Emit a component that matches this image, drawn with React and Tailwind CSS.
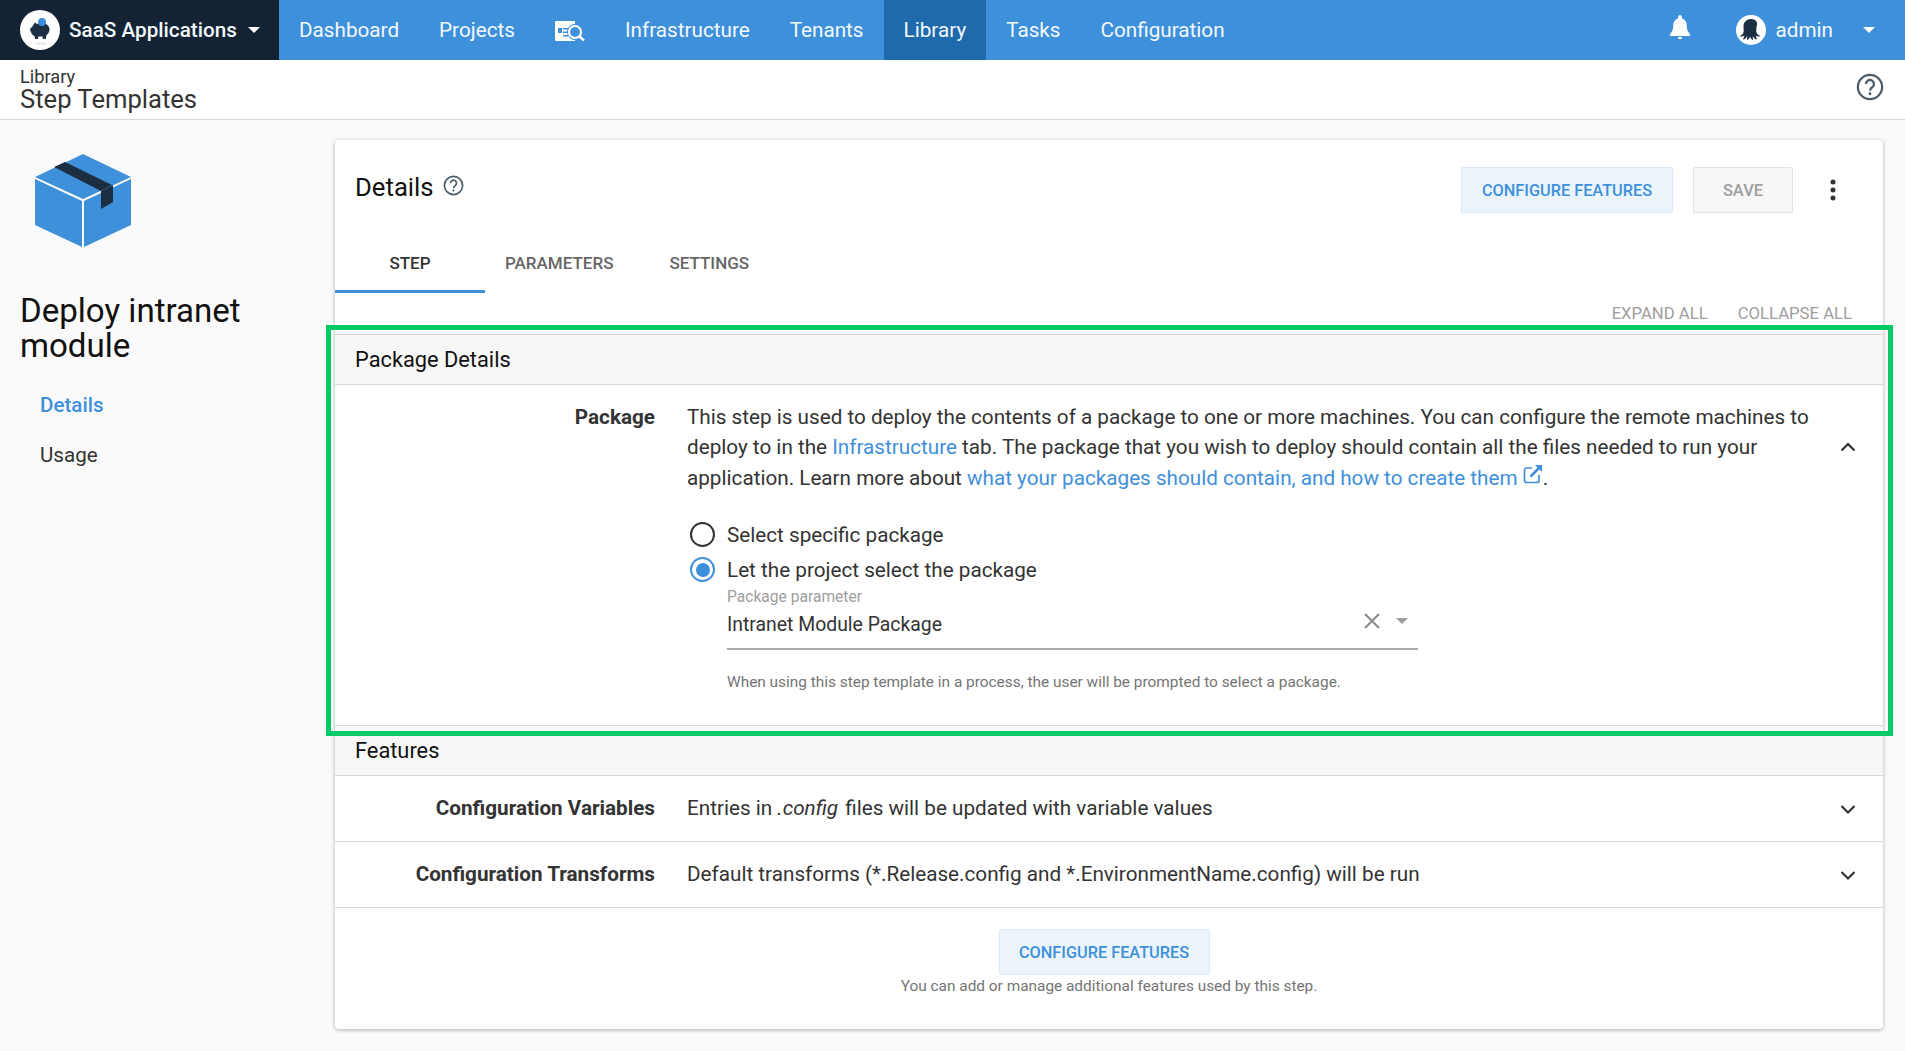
import React from "react";

const T = "font-['Roboto',sans-serif]";

function Caret({ className = "" }) {
  return (
    <svg viewBox="0 0 12 6" className={className}>
      <path d="M0 0h12L6 6z" fill="currentColor" />
    </svg>
  );
}

function Help({ size, color = "#4b5b68" }) {
  return (
    <svg width={size} height={size} viewBox="0 0 24 24" fill="none">
      <circle cx="12" cy="12" r="10.4" stroke={color} strokeWidth="1.9" />
      <path d="M8.6 9.4a3.4 3.4 0 1 1 5.3 2.8c-1.2.8-1.9 1.4-1.9 3" stroke={color} strokeWidth="1.9" fill="none" />
      <circle cx="12" cy="17.8" r="1.2" fill={color} />
    </svg>
  );
}

function Chevron({ up }) {
  return (
    <svg width="18" height="12" viewBox="0 0 18 12" fill="none">
      <path d={up ? "M2.5 9.5 9 3l6.5 6.5" : "M2.5 3 9 9.5 15.5 3"} stroke="#333" strokeWidth="2.2" />
    </svg>
  );
}

function BoxLogo() {
  return (
    <svg width="98" height="96" viewBox="34 152 98 96" className="ml-[34px] mt-[13px]">
      <path d="M83 153 131 176 83 198 35 176Z" fill="#3f90db" />
      <path d="M35 178 82 200V246L35 224Z" fill="#3f90db" />
      <path d="M131 178 84 200V246L131 224Z" fill="#3f90db" />
      <path d="M54 166 65 161 112 184 101 190Z" fill="#1b2e42" />
      <path d="M101 190 113 184V201L101 208Z" fill="#1b2e42" />
    </svg>
  );
}

function Row({ label, children }) {
  return (
    <div className="flex h-[66px] items-center border-b border-[#d8d8d8] bg-white pt-[1px]">
      <div className="w-[320px] text-right text-[20.7px] font-bold text-[#333]">{label}</div>
      <div className="ml-[32px] flex-1 text-[20.7px] text-[#333]">{children}</div>
      <div className="mr-[26px]">
        <Chevron />
      </div>
    </div>
  );
}

function Radio({ on, label }) {
  return (
    <div className="flex h-[35px] items-center">
      <span
        className={`mr-[12px] ml-[3px] flex h-[25px] w-[25px] items-center justify-center rounded-full border-[2.4px] ${
          on ? "border-[#3f90db]" : "border-[#333]"
        }`}
      >
        {on && <span className="h-[14px] w-[14px] rounded-full bg-[#3f90db]" />}
      </span>
      <span className="text-[20.7px] text-[#333]">{label}</span>
    </div>
  );
}

function NavItem({ children, active }) {
  return (
    <div className={`flex h-full items-center px-5 pt-[2px] text-[20.7px] text-[#f3f8fd] ${active ? "bg-[#1f69ad]" : ""}`}>
      {children}
    </div>
  );
}

export default function App() {
  return (
    <div className={`${T} relative min-h-[1051px] overflow-hidden bg-[#fafafa]`}>
      {/* top bar */}
      <div className="flex h-[60px] bg-[#3f90db]">
        <div className="flex w-[279px] items-center bg-[#132333] pl-[20px]">
          <svg width="40" height="40" viewBox="0 0 40 40">
            <circle cx="20" cy="20" r="20" fill="#fff" />
            <path d="M12 17c-2 1-2.500 3.500-1 5 .5 2 2 3.500 3.500 4l.5 3h3l.3-2.500h4.200l.3 2.500h3l.7-4c2-1.500 3-3.500 3-5.500 0-4-3.500-6.500-8-6.500-1.500 0-3 .2-4.500 1l-2-1.500z" fill="#1b2e42" />
            <circle cx="22" cy="12" r="4" fill="#3f90db" />
            <path d="M14 35h13l-2.500-3h-8z" fill="#eeeeee" />
          </svg>
          <span className="ml-[9px] pt-[2px] text-[20.7px] font-medium text-[#f3f8fd]">SaaS Applications</span>
          <Caret className="ml-[11px] w-[12px] text-white" />
        </div>
        <NavItem>Dashboard</NavItem>
        <NavItem>Projects</NavItem>
        <NavItem>
          <svg width="30" height="20" viewBox="0 0 30 20">
            <path d="M0 1a1 1 0 0 1 1-1h19v20H1a1 1 0 0 1-1-1z" fill="#fff" />
            <path d="M3 7h4v5H3z" fill="#3f90db" />
            <path d="M8 7h5v1.600H8zM8 10.500h5v1.600H8zM8 14h5v1.600H8z" fill="#3f90db" />
            <circle cx="20" cy="11" r="7" fill="#3f90db" stroke="#3f90db" strokeWidth="2" />
            <circle cx="20" cy="11" r="6" fill="#3f90db" stroke="#fff" strokeWidth="2.200" />
            <path d="M24.500 15.500l4.500 4" stroke="#fff" strokeWidth="2.400" />
          </svg>
        </NavItem>
        <NavItem>Infrastructure</NavItem>
        <NavItem>Tenants</NavItem>
        <NavItem active>Library</NavItem>
        <NavItem>Tasks</NavItem>
        <NavItem>Configuration</NavItem>
        <div className="ml-auto flex items-center">
          <svg width="20" height="25" viewBox="0 0 20 25" className="mb-[5px]">
            <path d="M10 0a1.800 1.800 0 0 1 1.800 1.800v1.400C15 4.200 16.800 7 16.800 10.500c0 3.700.7 6 3.200 8.500v2H0v-2c2.500-2.500 3.200-4.800 3.200-8.500C3.200 7 5 4.200 8.200 3.200V1.800A1.800 1.800 0 0 1 10 0Z" fill="#fff" />
            <path d="M7.800 22h4.400a2.200 2.200 0 0 1-4.400 0Z" fill="#fff" />
          </svg>
          <svg width="30" height="30" viewBox="0 0 30 30" className="ml-[46px]">
            <circle cx="15" cy="15" r="15" fill="#fff" />
            <path d="M15 4c-4.500 0-7.500 3.300-7.500 7.500 0 3 .8 5-.5 7-1 1.500-2.500 2-3.500 2.500 1.500 1 3.800.3 5-.8-.4 1.600-1.200 3-1.500 4.300 1.800 0 3.300-1.800 4.200-3.500 0 1.600-.2 3-.2 4 1.400-.3 2.500-2 3-3.500.5 1.500 1.600 3.200 3 3.500 0-1-.2-2.400-.2-4 .9 1.700 2.400 3.500 4.200 3.500-.3-1.300-1.100-2.700-1.500-4.300 1.200 1.100 3.500 1.800 5 .8-1-.5-2.500-1-3.500-2.500-1.300-2-.5-4-.5-7C22.500 7.300 19.500 4 15 4Z" fill="#1b2e42" />
          </svg>
          <span className="ml-[9px] pt-[2px] text-[20.7px] text-[#f3f8fd]">admin</span>
          <Caret className="ml-[30px] mr-[30px] w-[12px] text-white" />
        </div>
      </div>

      {/* title bar */}
      <div className="flex h-[60px] items-center justify-between border-b border-[#d8d8d8] bg-white pl-[20px] pr-[21px]">
        <div className="flex flex-col">
          <span className="text-[18.2px] leading-[19px] text-[#333]">Library</span>
          <span className="text-[25.6px] leading-[27px] text-[#333]">Step Templates</span>
        </div>
        <div className="mb-[6px]">
          <Help size={28} />
        </div>
      </div>

      <div className="flex">
        {/* sidebar */}
        <div className="w-[335px] pt-[20px]">
          <BoxLogo />
          <div className="mt-[44px] pl-[20px] text-[33.1px] leading-[35px] text-[#111]">
            Deploy intranet
            <br />
            module
          </div>
          <div className="mt-[27px] pl-[40px] text-[20.6px] font-medium text-[#3f90db]">Details</div>
          <div className="mt-[19px] pl-[40px] text-[20.6px] text-[#333]">Usage</div>
        </div>

        {/* card */}
        <div className="mt-[20px] h-[889px] w-[1548px] rounded-[4px] bg-white shadow-[0_1px_4px_rgba(0,0,0,0.3)]">
          <div className="flex h-[93px] items-center pl-[20px]">
            <span className="pt-[2px] text-[25.7px] text-[#111]">Details</span>
            <span className="ml-[9px] mb-[2px]">
              <Help size={21} />
            </span>
            <button className="ml-auto mt-[7px] flex h-[46px] w-[212px] items-center justify-center rounded-[2px] border border-[#dbe8f5] bg-[#ecf4fb] pt-[2px] text-[16.3px] font-medium text-[#3f90db]">
              CONFIGURE FEATURES
            </button>
            <button className="ml-[20px] mt-[7px] flex h-[46px] w-[100px] items-center justify-center rounded-[2px] border border-[#e2e2e2] bg-[#f7f7f7] pt-[2px] text-[16.5px] font-medium text-[#9e9e9e]">
              SAVE
            </button>
            <svg width="8" height="24" viewBox="0 0 8 24" className="ml-[36px] mr-[46px] mt-[7px]">
              <circle cx="4" cy="4" r="2.500" fill="#333" />
              <circle cx="4" cy="12" r="2.500" fill="#333" />
              <circle cx="4" cy="20" r="2.500" fill="#333" />
            </svg>
          </div>
          <div className="flex h-[60px] items-center text-[17px] font-medium text-[#666]">
            <div className="flex h-full w-[150px] items-center justify-center border-b-[3px] border-[#3f90db] pt-[5px] text-[#333]">
              STEP
            </div>
            <div className="px-5 pt-[2px]">PARAMETERS</div>
            <div className="ml-4 px-5 pt-[2px]">SETTINGS</div>
          </div>
          <div className="flex h-[41px] items-center justify-end gap-[30px] pr-[31px] pt-[1px] text-[16.7px] text-[#9e9e9e]">
            <span>EXPAND ALL</span>
            <span>COLLAPSE ALL</span>
          </div>

          <div className="flex h-[51px] items-center border-y border-[#d8d8d8] bg-[#f7f7f7] pl-[20px] pt-[1px] text-[21.8px] text-[#111]">
            Package Details
          </div>

          <div className="flex h-[341px] border-b border-[#d8d8d8] pt-[17px]">
            <div className="w-[320px] text-right text-[20.7px] font-bold leading-[30.400px] text-[#333]">Package</div>
            <div className="ml-[32px] flex-1 text-[20.7px] leading-[30.400px] text-[#333]">
              <p>
                This step is used to deploy the contents of a package to one or more machines. You can configure the remote machines to
                <br />
                deploy to in the <span className="text-[#3f90db]">Infrastructure</span> tab. The package that you wish to deploy should contain all the files needed to run your
                <br />
                application. Learn more about{" "}
                <span className="text-[#3f90db]">what your packages should contain, and how to create them</span>{" "}
                <svg width="20" height="20" viewBox="0 0 20 20" fill="none" className="inline-block align-[1px]">
                  <path d="M16 11v5.500a2 2 0 0 1-2 2H3.500a2 2 0 0 1-2-2V6a2 2 0 0 1 2-2H9" stroke="#3f90db" strokeWidth="1.700" />
                  <path d="M7.500 12.500 17 3" stroke="#3f90db" strokeWidth="2.500" />
                  <path d="M12 1h7v7z" fill="#3f90db" />
                </svg>
                .
              </p>
              <div className="mt-[24px]">
                <Radio label="Select specific package" />
                <Radio on label="Let the project select the package" />
              </div>
              <div className="ml-[40px] w-[691px]">
                <div className="text-[15.600px] leading-[20px] text-[#9e9e9e]">Package parameter</div>
                <div className="flex h-[43px] items-center justify-between border-b-2 border-[#aaa] pb-[6px]">
                  <span className="text-[19.4px] text-[#333]">Intranet Module Package</span>
                  <span className="mb-[8px] flex items-center">
                    <svg width="20" height="20" viewBox="0 0 20 20" fill="none">
                      <path d="M3 3l14 14M17 3 3 17" stroke="#8a8a8a" strokeWidth="2" />
                    </svg>
                    <Caret className="ml-[14px] mr-[10px] w-[12px] text-[#9e9e9e]" />
                  </span>
                </div>
                <div className="mt-[22px] text-[15.400px] leading-[20px] text-[#757575]">
                  When using this step template in a process, the user will be prompted to select a package.
                </div>
              </div>
            </div>
            <div className="mr-[26px] mt-[39px]">
              <Chevron up />
            </div>
          </div>

          <div className="flex h-[50px] items-center border-b border-[#d8d8d8] bg-[#f7f7f7] pl-[20px] pt-[1px] text-[21.8px] text-[#111]">
            Features
          </div>
          <Row label="Configuration Variables">
            Entries in <i className="pr-[2px]">.config</i> files will be updated with variable values
          </Row>
          <Row label="Configuration Transforms">
            Default transforms (*.Release.config and *.EnvironmentName.config) will be run
          </Row>

          <div className="flex flex-col items-center pt-[21px]">
            <button className="mr-[10px] flex h-[46px] w-[211px] items-center justify-center rounded-[2px] border border-[#dbe8f5] bg-[#ecf4fb] pt-[3px] text-[16.3px] font-medium text-[#3f90db]">
              CONFIGURE FEATURES
            </button>
            <div className="mt-[1px] text-[15.400px] leading-[20px] text-[#757575]">
              You can add or manage additional features used by this step.
            </div>
          </div>
        </div>
      </div>

      {/* highlight annotation */}
      <div className="pointer-events-none absolute left-[326px] top-[325px] h-[411px] w-[1567px] border-[5px] border-[#00c968]" />
    </div>
  );
}
